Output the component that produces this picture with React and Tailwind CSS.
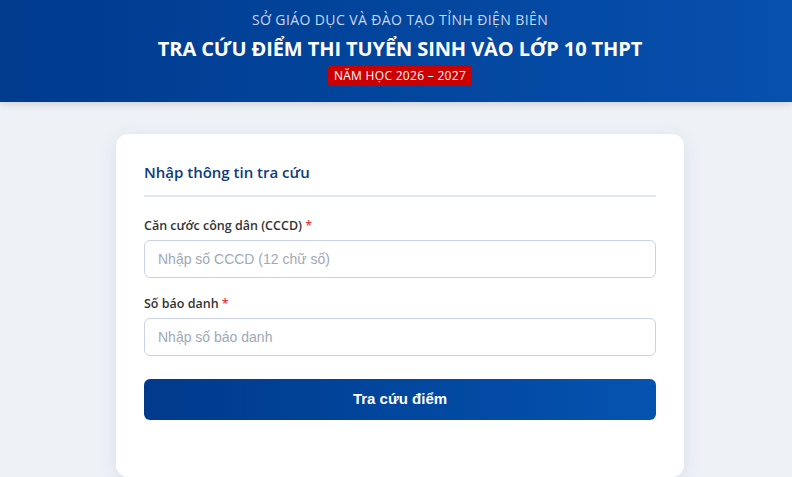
import React from "react";

export default function App() {
  return (
    <div className="min-h-screen bg-[#eef2f7] font-['Open_Sans',sans-serif]">
      <header className="h-[102px] bg-gradient-to-r from-[#003b8e] to-[#0750ad] flex flex-col items-center pl-[8px] pt-[11px] shadow-[0_2px_8px_rgba(0,0,0,0.15)]">
        <p className="text-[14px] leading-[18px] tracking-[0.4px] text-[#c9d7f0]">
          SỞ GIÁO DỤC VÀ ĐÀO TẠO TỈNH ĐIỆN BIÊN
        </p>
        <h1 className="mt-[8px] text-[20px] leading-[24px] font-bold text-white tracking-[-0.1px]">
          TRA CỨU ĐIỂM THI TUYỂN SINH VÀO LỚP 10 THPT
        </h1>
        <span className="mt-[5px] bg-[#cc0000] text-white text-[12px] leading-[20px] tracking-[0.3px] px-[6px] rounded-[3px]">
          NĂM HỌC 2026 – 2027
        </span>
      </header>

      <main className="flex justify-center pl-[8px] pt-[32px]">
        <div className="w-[568px] bg-white rounded-[12px] shadow-[0_4px_18px_rgba(30,60,120,0.10)] px-[28px] pt-[26px] pb-[57px]">
          <h2 className="text-[15px] leading-[24px] font-semibold text-[#0b3a80] pb-[11px] border-b-2 border-[#e2e8f0]">
            Nhập thông tin tra cứu
          </h2>

          <form className="mt-[20px]">
            <label className="block text-[12.5px] leading-[18px] font-semibold text-[#333] mb-[5px]">
              Căn cước công dân (CCCD) <span className="text-[#e53e3e]">*</span>
            </label>
            <input
              type="text"
              placeholder="Nhập số CCCD (12 chữ số)"
              className="w-full h-[38px] rounded-[6px] border border-[#c9d3e3] px-[13px] text-[14px] font-['Liberation_Sans',sans-serif] placeholder:text-[#a0a8b8] outline-none"
            />

            <label className="block mt-[17px] text-[12.5px] leading-[18px] font-semibold text-[#333] mb-[5px]">
              Số báo danh <span className="text-[#e53e3e]">*</span>
            </label>
            <input
              type="text"
              placeholder="Nhập số báo danh"
              className="w-full h-[38px] rounded-[6px] border border-[#c9d3e3] px-[13px] text-[14px] font-['Liberation_Sans',sans-serif] placeholder:text-[#a0a8b8] outline-none"
            />

            <button
              type="button"
              className="mt-[23px] w-full h-[41px] rounded-[6px] bg-gradient-to-r from-[#003a8c] to-[#0553b0] text-white text-[15px] font-bold font-['Liberation_Sans',sans-serif]"
            >
              Tra cứu điểm
            </button>
          </form>
        </div>
      </main>
    </div>
  );
}
